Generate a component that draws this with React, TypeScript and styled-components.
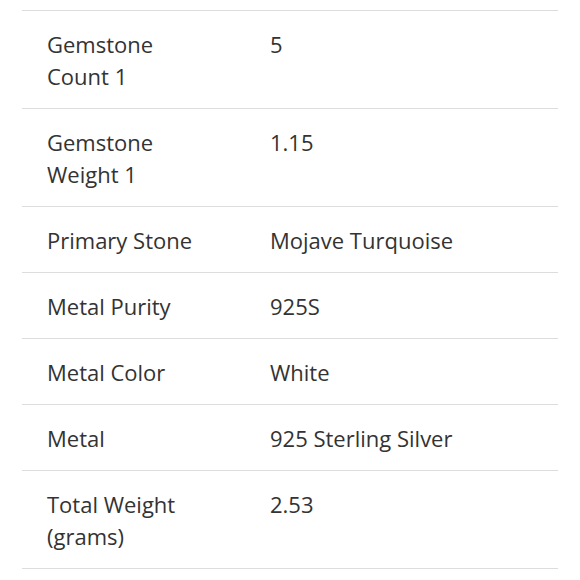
import styled, { createGlobalStyle } from "styled-components";

const GlobalStyle = createGlobalStyle`
  body {
    margin: 0;
    background: #ffffff;
    font-family: "Open Sans", "Liberation Sans", sans-serif;
  }
`;

const SpecsWrap = styled.div`
  padding: 10px 22px 0 22px;
`;

const SpecsTable = styled.dl`
  margin: 0;
  border-top: 1px solid #dddddd;
`;

const SpecRow = styled.div`
  display: grid;
  grid-template-columns: 248px 1fr;
  border-bottom: 1px solid #dddddd;
  padding: 17px 0 16px 0;
  font-size: 22px;
  line-height: 32px;
  color: #333333;
`;

const SpecLabel = styled.dt`
  margin: 0;
  padding: 0 50px 0 25px;
`;

const SpecValue = styled.dd`
  margin: 0;
`;

const specs = [
  { label: "Gemstone Count 1", value: "5" },
  { label: "Gemstone Weight 1", value: "1.15" },
  { label: "Primary Stone", value: "Mojave Turquoise" },
  { label: "Metal Purity", value: "925S" },
  { label: "Metal Color", value: "White" },
  { label: "Metal", value: "925 Sterling Silver" },
  { label: "Total Weight (grams)", value: "2.53" },
];

const App = () => {
  return (
    <>
      <GlobalStyle />
      <SpecsWrap>
        <SpecsTable>
          {specs.map((spec) => (
            <SpecRow key={spec.label}>
              <SpecLabel>{spec.label}</SpecLabel>
              <SpecValue>{spec.value}</SpecValue>
            </SpecRow>
          ))}
        </SpecsTable>
      </SpecsWrap>
    </>
  );
};

export default App;
